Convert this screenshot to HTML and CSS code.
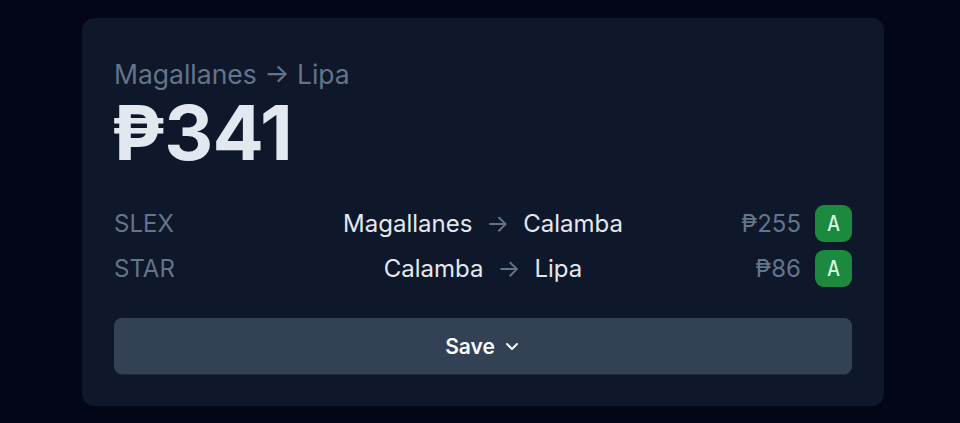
FILE: index.html
```html
<!DOCTYPE html>
<html lang="en">
<head>
    <meta charset="UTF-8">
    <meta name="viewport" content="width=device-width, initial-scale=1.0">
    <title>Toll Fare</title>
    <link rel="stylesheet" href="styles.css">
</head>
<body>
    <div class="card">
        <p class="trip">Magallanes → Lipa</p>
        <h1 class="total">₱341</h1>

        <div class="legs">
            <div class="leg">
                <span class="road">SLEX</span>
                <span class="route">Magallanes <span class="arrow">→</span> Calamba</span>
                <span class="fare">₱255 <span class="badge">A</span></span>
            </div>
            <div class="leg">
                <span class="road">STAR</span>
                <span class="route">Calamba <span class="arrow">→</span> Lipa</span>
                <span class="fare">₱86 <span class="badge">A</span></span>
            </div>
        </div>

        <button class="save">
            Save
            <svg width="18" height="18" viewBox="0 0 18 18" fill="none" stroke="currentColor" stroke-width="2" stroke-linecap="round" stroke-linejoin="round"><path d="M4 7l5 5 5-5"/></svg>
        </button>
    </div>
</body>
</html>
```

FILE: styles.css
```css
body {
    margin: 0;
    background-color: #020617;
    font-family: Inter, "Noto Sans", sans-serif;
    padding-top: 18px;
}

.card {
    width: 738px;
    margin: 0 auto 0 82px;
    background-color: #0f172a;
    border-radius: 12px;
    padding: 40px 32px 32px;
}

.trip {
    margin: 0;
    font-size: 26.5px;
    line-height: 32px;
    color: #64748b;
}

.total {
    margin: 4px 0 0 -3px;
    font-size: 76px;
    line-height: 76px;
    font-weight: 700;
    color: #e2e8f0;
    letter-spacing: -1px;
}

.legs {
    margin-top: 35px;
    display: flex;
    flex-direction: column;
    gap: 8px;
}

.leg {
    display: grid;
    grid-template-columns: 1fr auto 1fr;
    align-items: center;
    height: 37px;
    font-size: 24px;
}

.road {
    color: #64748b;
}

.route {
    display: flex;
    align-items: center;
    gap: 14px;
    color: #e2e8f0;
}

.arrow {
    color: #64748b;
}

.fare {
    display: flex;
    justify-content: flex-end;
    align-items: center;
    gap: 14px;
    color: #64748b;
}

.badge {
    width: 37px;
    height: 37px;
    border-radius: 9px;
    background-color: #1b8a3e;
    color: #dcfce7;
    font-family: "DejaVu Sans Mono", monospace;
    font-size: 21px;
    display: flex;
    align-items: center;
    justify-content: center;
}

.save {
    margin-top: 31px;
    width: 100%;
    height: 56px;
    border: none;
    border-radius: 8px;
    background-color: #334155;
    box-shadow: 0 1px 0 #1e293b;
    color: #f8fafc;
    font-family: inherit;
    font-size: 21px;
    font-weight: 600;
    display: flex;
    align-items: center;
    justify-content: center;
    gap: 8px;
    cursor: pointer;
}
```
